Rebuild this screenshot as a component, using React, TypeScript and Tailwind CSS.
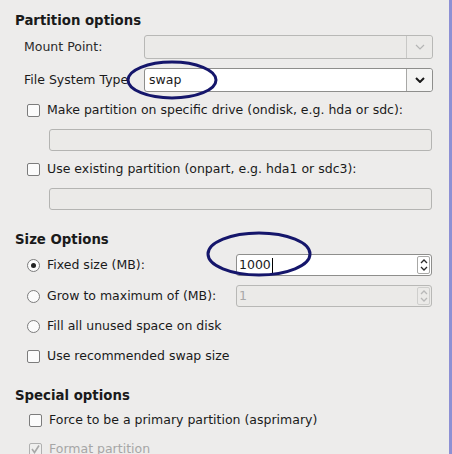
import React from "react"

const font = { fontFamily: '"DejaVu Sans", Verdana, sans-serif' }

function Chevron({ disabled }: { disabled?: boolean }) {
  return (
    <svg width="10" height="6" viewBox="0 0 10 6">
      <path
        d="M1 1 L5 5 L9 1"
        fill="none"
        stroke={disabled ? "#b5b5b5" : "#1a1a1a"}
        strokeWidth={disabled ? 1.2 : 2}
      />
    </svg>
  )
}

function Combo({ value, disabled }: { value?: string; disabled?: boolean }) {
  return (
    <div
      className={`ml-auto mr-[16px] flex h-full w-[289px] rounded-[3px] border ${
        disabled ? "border-[#b8b8b6] bg-[#ebeae8]" : "border-[#8e8e8c] bg-white"
      }`}
    >
      <div className="flex flex-1 items-center pl-[4px] pt-px text-[#1a1a1a]">{value}</div>
      <div
        className={`flex w-[26px] items-center justify-center border-l ${
          disabled ? "border-[#c8c8c6] bg-[#ebeae8]" : "border-[#a8a8a6] bg-[#f4f4f3]"
        } rounded-r-[3px]`}
      >
        <Chevron disabled={disabled} />
      </div>
    </div>
  )
}

function Check({ checked, disabled }: { checked?: boolean; disabled?: boolean }) {
  return (
    <div
      className={`flex h-[13px] w-[13px] shrink-0 items-center justify-center rounded-[2px] border ${
        disabled ? "border-[#b0b0b0] bg-[#efefee]" : "border-[#7c7c7c] bg-[#fbfbfb]"
      }`}
    >
      {checked && (
        <svg width="11" height="11" viewBox="0 0 11 11">
          <path d="M2 5 L4.5 8.5 L9 1.5" fill="none" stroke="#a8a8a8" strokeWidth="1.6" />
        </svg>
      )}
    </div>
  )
}

function Radio({ checked }: { checked?: boolean }) {
  return (
    <div className="flex h-[13px] w-[13px] shrink-0 items-center justify-center rounded-full border border-[#7c7c7c] bg-[#fbfbfb]">
      {checked && <div className="h-[5px] w-[5px] rounded-full bg-[#222]" />}
    </div>
  )
}

function Spin({ value, disabled }: { value: string; disabled?: boolean }) {
  const c = disabled ? "#b8b8b8" : "#2a2a2a"
  return (
    <div
      className={`ml-auto mr-[17px] flex h-full w-[196px] rounded-[3px] border ${
        disabled ? "border-[#b8b8b6] bg-[#ebeae8]" : "border-[#8e8e8c] bg-white"
      }`}
    >
      <div
        className={`flex flex-1 items-center pl-[2px] pt-px ${disabled ? "text-[#a8a8a8]" : "text-[#1a1a1a]"}`}
      >
        {value}
        {!disabled && <span className="ml-[1px] h-[15px] w-px bg-black" />}
      </div>
      <div
        className={`my-[1px] mr-[1px] flex w-[13px] flex-col items-center justify-center gap-[2px] rounded-[2px] border ${
          disabled ? "border-[#cfcfcd]" : "border-[#a8a8a6]"
        }`}
      >
        <svg width="8" height="5" viewBox="0 0 8 5">
          <path d="M1 4 L4 1 L7 4" fill="none" stroke={c} strokeWidth="1.3" />
        </svg>
        <svg width="8" height="5" viewBox="0 0 8 5">
          <path d="M1 1 L4 4 L7 1" fill="none" stroke={c} strokeWidth="1.3" />
        </svg>
      </div>
    </div>
  )
}

function Entry() {
  return <div className="ml-[49px] mr-[17px] h-[22px] rounded-[3px] border border-[#b4b4b2] bg-[#ebeae8]" />
}

export default function App() {
  return (
    <div
      className="relative flex h-[454px] w-[452px] overflow-hidden bg-[#edeceb] text-[12.5px] text-[#1a1a1a]"
      style={font}
    >
      <div className="flex-1 pt-[12px]">
        <div className="flex h-[16px] items-center pl-[15px] pt-px text-[13.3px] font-bold">Partition options</div>

        <div className="mt-[7px] flex h-[24px] items-center pl-[24px]">
          <span className="pt-px text-[#2a2a2a]">Mount Point:</span>
          <Combo disabled />
        </div>
        <div className="mt-[9px] flex h-[24px] items-center pl-[24px]">
          <span className="pt-px">File System Type</span>
          <Combo value="swap" />
        </div>

        <div className="mt-[9px] flex h-[18px] items-center gap-[7px] pl-[27px]">
          <Check />
          <span>Make partition on specific drive (ondisk, e.g. hda or sdc):</span>
        </div>
        <div className="mt-[10px]">
          <Entry />
        </div>
        <div className="mt-[9px] flex h-[18px] items-center gap-[7px] pl-[27px]">
          <Check />
          <span>Use existing partition (onpart, e.g. hda1 or sdc3):</span>
        </div>
        <div className="mt-[10px]">
          <Entry />
        </div>

        <div className="mt-[21px] flex h-[16px] items-center pl-[15px] pt-px text-[13.3px] font-bold">Size Options</div>
        <div className="mt-[7px] flex h-[22px] items-center gap-[7px] pl-[27px]">
          <Radio checked />
          <span>Fixed size (MB):</span>
          <Spin value="1000" />
        </div>
        <div className="mt-[9px] flex h-[22px] items-center gap-[7px] pl-[27px]">
          <Radio />
          <span>Grow to maximum of (MB):</span>
          <Spin value="1" disabled />
        </div>
        <div className="mt-[8px] flex h-[22px] items-center gap-[7px] pl-[27px]">
          <Radio />
          <span className="pt-px">Fill all unused space on disk</span>
        </div>
        <div className="mt-[8px] flex h-[22px] items-center gap-[7px] pl-[27px]">
          <Check />
          <span className="pt-px">Use recommended swap size</span>
        </div>

        <div className="mt-[20px] flex h-[16px] items-center pl-[15px] pt-px text-[13.3px] font-bold">Special options</div>
        <div className="mt-[6px] flex h-[22px] items-center gap-[7px] pl-[29px]">
          <Check />
          <span className="pt-px">Force to be a primary partition (asprimary)</span>
        </div>
        <div className="mt-[7px] flex h-[22px] items-center gap-[7px] pl-[29px]">
          <Check checked disabled />
          <span className="pt-px text-[#a6a6a6]">Format partition</span>
        </div>
      </div>
      <div className="w-[3px] shrink-0 bg-[#8d90d4]" />

      {/* hand-drawn annotations */}
      <svg className="pointer-events-none absolute left-0 top-0" width="452" height="454">
        <ellipse cx="172" cy="80" rx="44" ry="18" fill="none" stroke="#15166b" strokeWidth="3" />
        <ellipse cx="259" cy="254" rx="51" ry="21" fill="none" stroke="#15166b" strokeWidth="3" />
      </svg>
    </div>
  )
}
